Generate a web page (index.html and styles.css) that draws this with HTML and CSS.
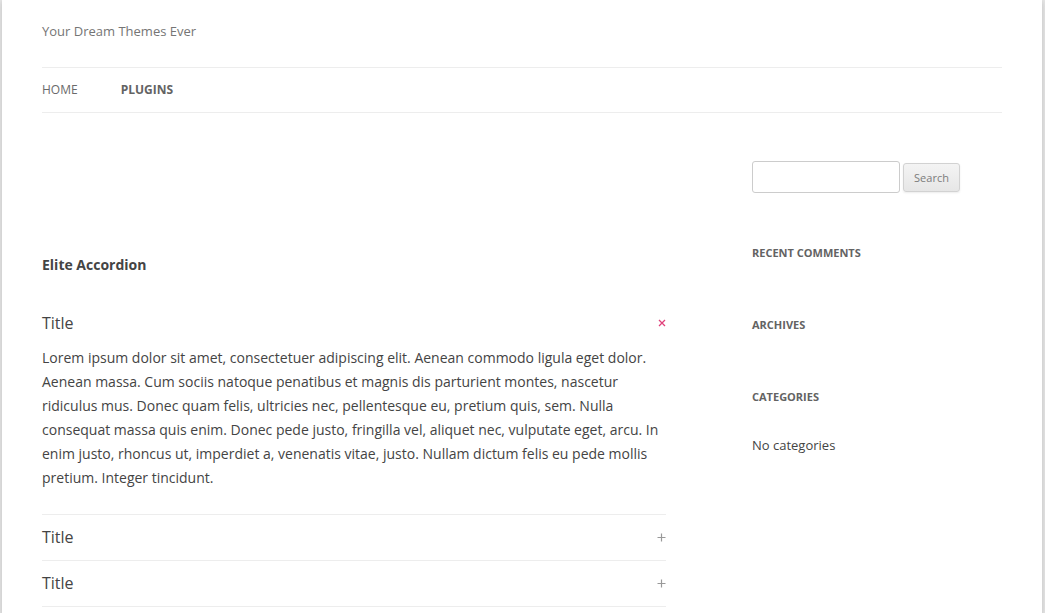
FILE: index.html
```html
<!DOCTYPE html>
<html lang="en">
<head>
<meta charset="utf-8">
<title>Plugins</title>
<link rel="stylesheet" href="styles.css">
</head>
<body>
<div class="site">
  <header class="site-header">
    <p class="site-description">Your Dream Themes Ever</p>
    <nav class="main-nav">
      <a class="nav-item" href="#">Home</a>
      <a class="nav-item current" href="#">Plugins</a>
    </nav>
  </header>
  <div class="site-main">
    <main class="primary">
      <h2 class="entry-title">Elite Accordion</h2>
      <div class="accordion">
        <div class="acc-item open">
          <div class="acc-head">
            <span class="acc-title">Title</span>
            <svg class="acc-icon" width="8" height="8" viewBox="0 0 8 8"><path d="M1 1L7 7M7 1L1 7" stroke="#e0407a" stroke-width="1.3" fill="none"/></svg>
          </div>
          <div class="acc-body">
            <p>Lorem ipsum dolor sit amet, consectetuer adipiscing elit. Aenean commodo ligula eget dolor. Aenean massa. Cum sociis natoque penatibus et magnis dis parturient montes, nascetur ridiculus mus. Donec quam felis, ultricies nec, pellentesque eu, pretium quis, sem. Nulla consequat massa quis enim. Donec pede justo, fringilla vel, aliquet nec, vulputate eget, arcu. In enim justo, rhoncus ut, imperdiet a, venenatis vitae, justo. Nullam dictum felis eu pede mollis pretium. Integer tincidunt.</p>
          </div>
        </div>
        <div class="acc-item">
          <div class="acc-head">
            <span class="acc-title">Title</span>
            <svg class="acc-icon" width="9" height="9" viewBox="0 0 9 9"><path d="M4.5 0.5V8.5M0.5 4.5H8.5" stroke="#999" stroke-width="1.2" fill="none"/></svg>
          </div>
        </div>
        <div class="acc-item">
          <div class="acc-head">
            <span class="acc-title">Title</span>
            <svg class="acc-icon" width="9" height="9" viewBox="0 0 9 9"><path d="M4.5 0.5V8.5M0.5 4.5H8.5" stroke="#999" stroke-width="1.2" fill="none"/></svg>
          </div>
        </div>
      </div>
    </main>
    <aside class="secondary">
      <form class="search-form">
        <input class="search-input" type="text">
        <button class="search-btn" type="button">Search</button>
      </form>
      <section class="widget">
        <h3 class="widget-title">Recent Comments</h3>
      </section>
      <section class="widget">
        <h3 class="widget-title">Archives</h3>
      </section>
      <section class="widget">
        <h3 class="widget-title">Categories</h3>
        <ul class="widget-list"><li>No categories</li></ul>
      </section>
    </aside>
  </div>
</div>
</body>
</html>
```
FILE: styles.css
```css
html, body {
  margin: 0;
  padding: 0;
}
body {
  background: #e6e6e6;
  font-family: "Open Sans", "Liberation Sans", sans-serif;
  font-size: 14px;
  line-height: 24px;
  color: #444;
}
.site {
  width: 960px;
  min-height: 613px;
  margin: 0 0 0 2px;
  padding: 0 40px;
  background: #fff;
  box-shadow: 0 2px 6px rgba(100, 100, 100, 0.3);
}
.site-header {
  padding-top: 22px;
}
.site-description {
  margin: 0;
  font-size: 13px;
  line-height: 18px;
  color: #757575;
}
.main-nav {
  margin-top: 27px;
  border-top: 1px solid #ededed;
  border-bottom: 1px solid #ededed;
  height: 44px;
  display: flex;
  align-items: center;
  gap: 43px;
}
.nav-item {
  font-size: 12px;
  line-height: 44px;
  text-transform: uppercase;
  color: #6a6a6a;
  text-decoration: none;
}
.nav-item.current {
  color: #636363;
  font-weight: bold;
}
.site-main {
  display: flex;
  justify-content: space-between;
}
.primary {
  width: 624px;
  padding-top: 140px;
}
.entry-title {
  margin: 0;
  font-size: 14px;
  line-height: 24px;
  font-weight: bold;
  color: #444;
}
.accordion {
  margin-top: 24px;
}
.acc-item {
  border-bottom: 1px solid #ededed;
}
.acc-head {
  display: flex;
  align-items: center;
  justify-content: space-between;
  padding: 10px 0 11px;
}
.acc-title {
  font-size: 16px;
  line-height: 24px;
  color: #444;
}
.acc-icon {
  display: block;
}
.acc-body p {
  margin: 0;
  padding-bottom: 24px;
  font-size: 14px;
  line-height: 24px;
  color: #444;
}
.secondary {
  width: 250px;
  padding-top: 48px;
}
.search-form {
  display: flex;
  align-items: center;
  gap: 3px;
}
.search-input {
  box-sizing: border-box;
  width: 148px;
  height: 32px;
  margin: 0;
  border: 1px solid #ccc;
  border-radius: 3px;
  background: #fff;
}
.search-btn {
  box-sizing: border-box;
  width: 57px;
  height: 29px;
  margin: 0;
  padding: 0;
  font-family: "Open Sans", "Liberation Sans", sans-serif;
  font-size: 11px;
  color: #7c7c7c;
  background: linear-gradient(#f4f4f4, #e6e6e6);
  border: 1px solid #d2d2d2;
  border-radius: 3px;
  box-shadow: 0 1px 2px rgba(64, 64, 64, 0.1);
}
.widget {
  margin-top: 48px;
}
.widget-title {
  margin: 0;
  font-size: 11px;
  line-height: 24px;
  font-weight: bold;
  text-transform: uppercase;
  color: #636363;
}
.widget-list {
  list-style: none;
  margin: 24px 0 0;
  padding: 0;
  font-size: 13px;
  line-height: 24px;
  color: #444;
}
```
